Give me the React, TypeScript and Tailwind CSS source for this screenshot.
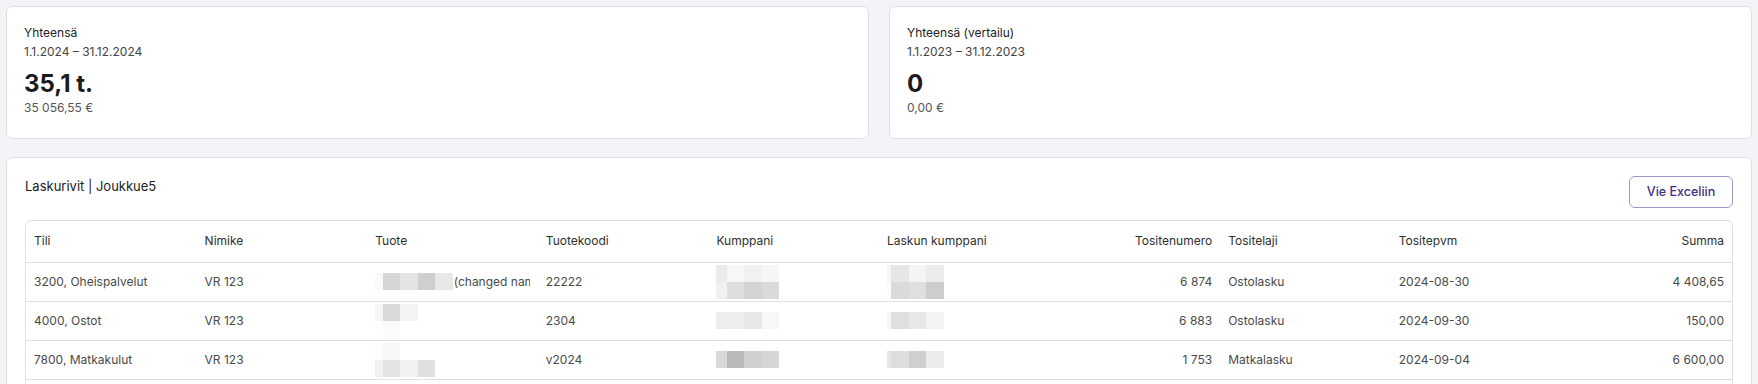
import React from 'react';

type Cell = string | { mosaic: string[][]; offset: string; text?: string };

const summaries = [
  { label: 'Yhteensä', range: '1.1.2024 – 31.12.2024', value: '35,1 t.', amount: '35 056,55 €' },
  { label: 'Yhteensä (vertailu)', range: '1.1.2023 – 31.12.2023', value: '0', amount: '0,00 €' },
];

const columns = [
  { name: 'Tili' },
  { name: 'Nimike' },
  { name: 'Tuote' },
  { name: 'Tuotekoodi' },
  { name: 'Kumppani' },
  { name: 'Laskun kumppani' },
  { name: 'Tositenumero', right: true },
  { name: 'Tositelaji' },
  { name: 'Tositepvm' },
  { name: 'Summa', right: true },
];

// blurred names are drawn as small grey mosaics
const rows: Cell[][] = [
  [
    '3200, Oheispalvelut',
    'VR 123',
    {
      mosaic: [['bg-[#fafafa]', 'bg-[#d6d6d6]', 'bg-[#e4e4e4]', 'bg-[#cfcfcf]', 'bg-[#e8e8e8]']],
      offset: '-ml-[10px]',
      text: '(changed name)',
    },
    '22222',
    {
      mosaic: [
        ['bg-[#ebebeb]', 'bg-[#f7f7f7]', 'bg-[#f1f1f1]', 'bg-[#f6f6f6]'],
        ['bg-[#f1f1f1]', 'bg-[#dedede]', 'bg-[#d3d3d3]', 'bg-[#dadada]'],
      ],
      offset: '-ml-[7px]',
    },
    {
      mosaic: [
        ['bg-[#f6f6f6]', 'bg-[#e6e6e6]', 'bg-[#f4f4f4]', 'bg-[#ececec]'],
        ['bg-[#fbfbfb]', 'bg-[#dadada]', 'bg-[#dfdfdf]', 'bg-[#cdcdcd]'],
      ],
      offset: '-ml-[13px]',
    },
    '6 874',
    'Ostolasku',
    '2024-08-30',
    '4 408,65',
  ],
  [
    '4000, Ostot',
    'VR 123',
    {
      mosaic: [
        ['bg-[#f6f6f6]', 'bg-[#d9d9d9]', 'bg-[#f4f4f4]'],
        ['bg-[#ffffff]', 'bg-[#fbfbfb]', 'bg-[#ffffff]'],
      ],
      offset: '-ml-[10px]',
    },
    '2304',
    {
      mosaic: [['bg-[#ededed]', 'bg-[#eeeeee]', 'bg-[#e8e8e8]', 'bg-[#f7f7f7]']],
      offset: '-ml-[7px]',
    },
    {
      mosaic: [['bg-[#f7f7f7]', 'bg-[#dfdfdf]', 'bg-[#e7e7e7]', 'bg-[#f3f3f3]']],
      offset: '-ml-[13px]',
    },
    '6 883',
    'Ostolasku',
    '2024-09-30',
    '150,00',
  ],
  [
    '7800, Matkakulut',
    'VR 123',
    {
      mosaic: [
        ['bg-[#fdfdfd]', 'bg-[#f8f8f8]', 'bg-[#ffffff]', 'bg-[#ffffff]'],
        ['bg-[#f1f1f1]', 'bg-[#e3e3e3]', 'bg-[#f2f2f2]', 'bg-[#e0e0e0]'],
      ],
      offset: '-ml-[10px]',
    },
    'v2024',
    {
      mosaic: [['bg-[#d9d9d9]', 'bg-[#b9b9b9]', 'bg-[#d0d0d0]', 'bg-[#d6d6d6]']],
      offset: '-ml-[7px]',
    },
    {
      mosaic: [['bg-[#e6e6e6]', 'bg-[#dedede]', 'bg-[#cfcfcf]', 'bg-[#ececec]']],
      offset: '-ml-[13px]',
    },
    '1 753',
    'Matkalasku',
    '2024-09-04',
    '6 600,00',
  ],
  ['', '', '', '', '', '', '', '', '', ''],
];

const Mosaic = ({ cells, offset }: { cells: string[][]; offset: string }) => (
  <div className={`flex flex-col shrink-0 ${offset}`}>
    {cells.map((r, i) => (
      <div key={i} className="flex">
        {r.map((c, j) => (
          <div key={j} className={`h-[17px] w-[17.5px] ${c}`} />
        ))}
      </div>
    ))}
  </div>
);

export default function App() {
  return (
    <div className="min-h-screen bg-[#f3f4f8] p-[6px] font-['Inter',sans-serif] text-[#1e1e1e]">
      <div className="grid grid-cols-2 gap-5">
        {summaries.map((s) => (
          <div key={s.label} className="rounded-md border border-[#dfe0e5] bg-white px-[17px] pt-[17px] pb-[22px]">
            <p className="text-[12px] leading-[18px] text-[#222]">{s.label}</p>
            <p className="mt-[1px] text-[12px] leading-[18px] text-[#444]">{s.range}</p>
            <p className="mt-[7px] text-[24px] font-bold leading-[32px] text-[#1b1b1b]">{s.value}</p>
            <p className="text-[12px] leading-[16px] text-[#555]">{s.amount}</p>
          </div>
        ))}
      </div>

      <div className="mt-[18px] rounded-md border border-[#dfe0e5] bg-white p-[18px]">
        <div className="flex items-start justify-between">
          <h2 className="text-[13px] leading-[20px] text-[#1b1b1b]">Laskurivit | Joukkue5</h2>
          <button className="h-8 w-[104px] rounded-md border border-[#9d95c8] text-[12.5px] font-medium text-[#3f2e8c]">
            Vie Exceliin
          </button>
        </div>

        <div className="mt-3 overflow-hidden rounded-md border border-[#e0e0e3]">
          <table className="w-full table-fixed border-collapse text-[12px]">
            <thead>
              <tr className="h-[41px] border-b border-[#e0e0e3]">
                {columns.map((c) => (
                  <th
                    key={c.name}
                    className={`px-2 font-normal text-[#2e2e2e] ${c.right ? 'text-right' : 'text-left'}`}
                  >
                    {c.name}
                  </th>
                ))}
              </tr>
            </thead>
            <tbody>
              {rows.map((r, i) => (
                <tr key={i} className="h-[39px] border-b border-[#e0e0e3]">
                  {r.map((cell, j) => (
                    <td
                      key={j}
                      className={`overflow-hidden whitespace-nowrap px-2 text-[12px] text-[#4a4a4a] ${
                        columns[j].right ? 'text-right' : 'text-left'
                      }`}
                    >
                      {typeof cell === 'string' ? (
                        cell
                      ) : (
                        <div className="flex items-center overflow-hidden">
                          <Mosaic cells={cell.mosaic} offset={cell.offset} />
                          {cell.text && <span className="shrink-0 pl-px">{cell.text}</span>}
                        </div>
                      )}
                    </td>
                  ))}
                </tr>
              ))}
            </tbody>
          </table>
        </div>
      </div>
    </div>
  );
}
